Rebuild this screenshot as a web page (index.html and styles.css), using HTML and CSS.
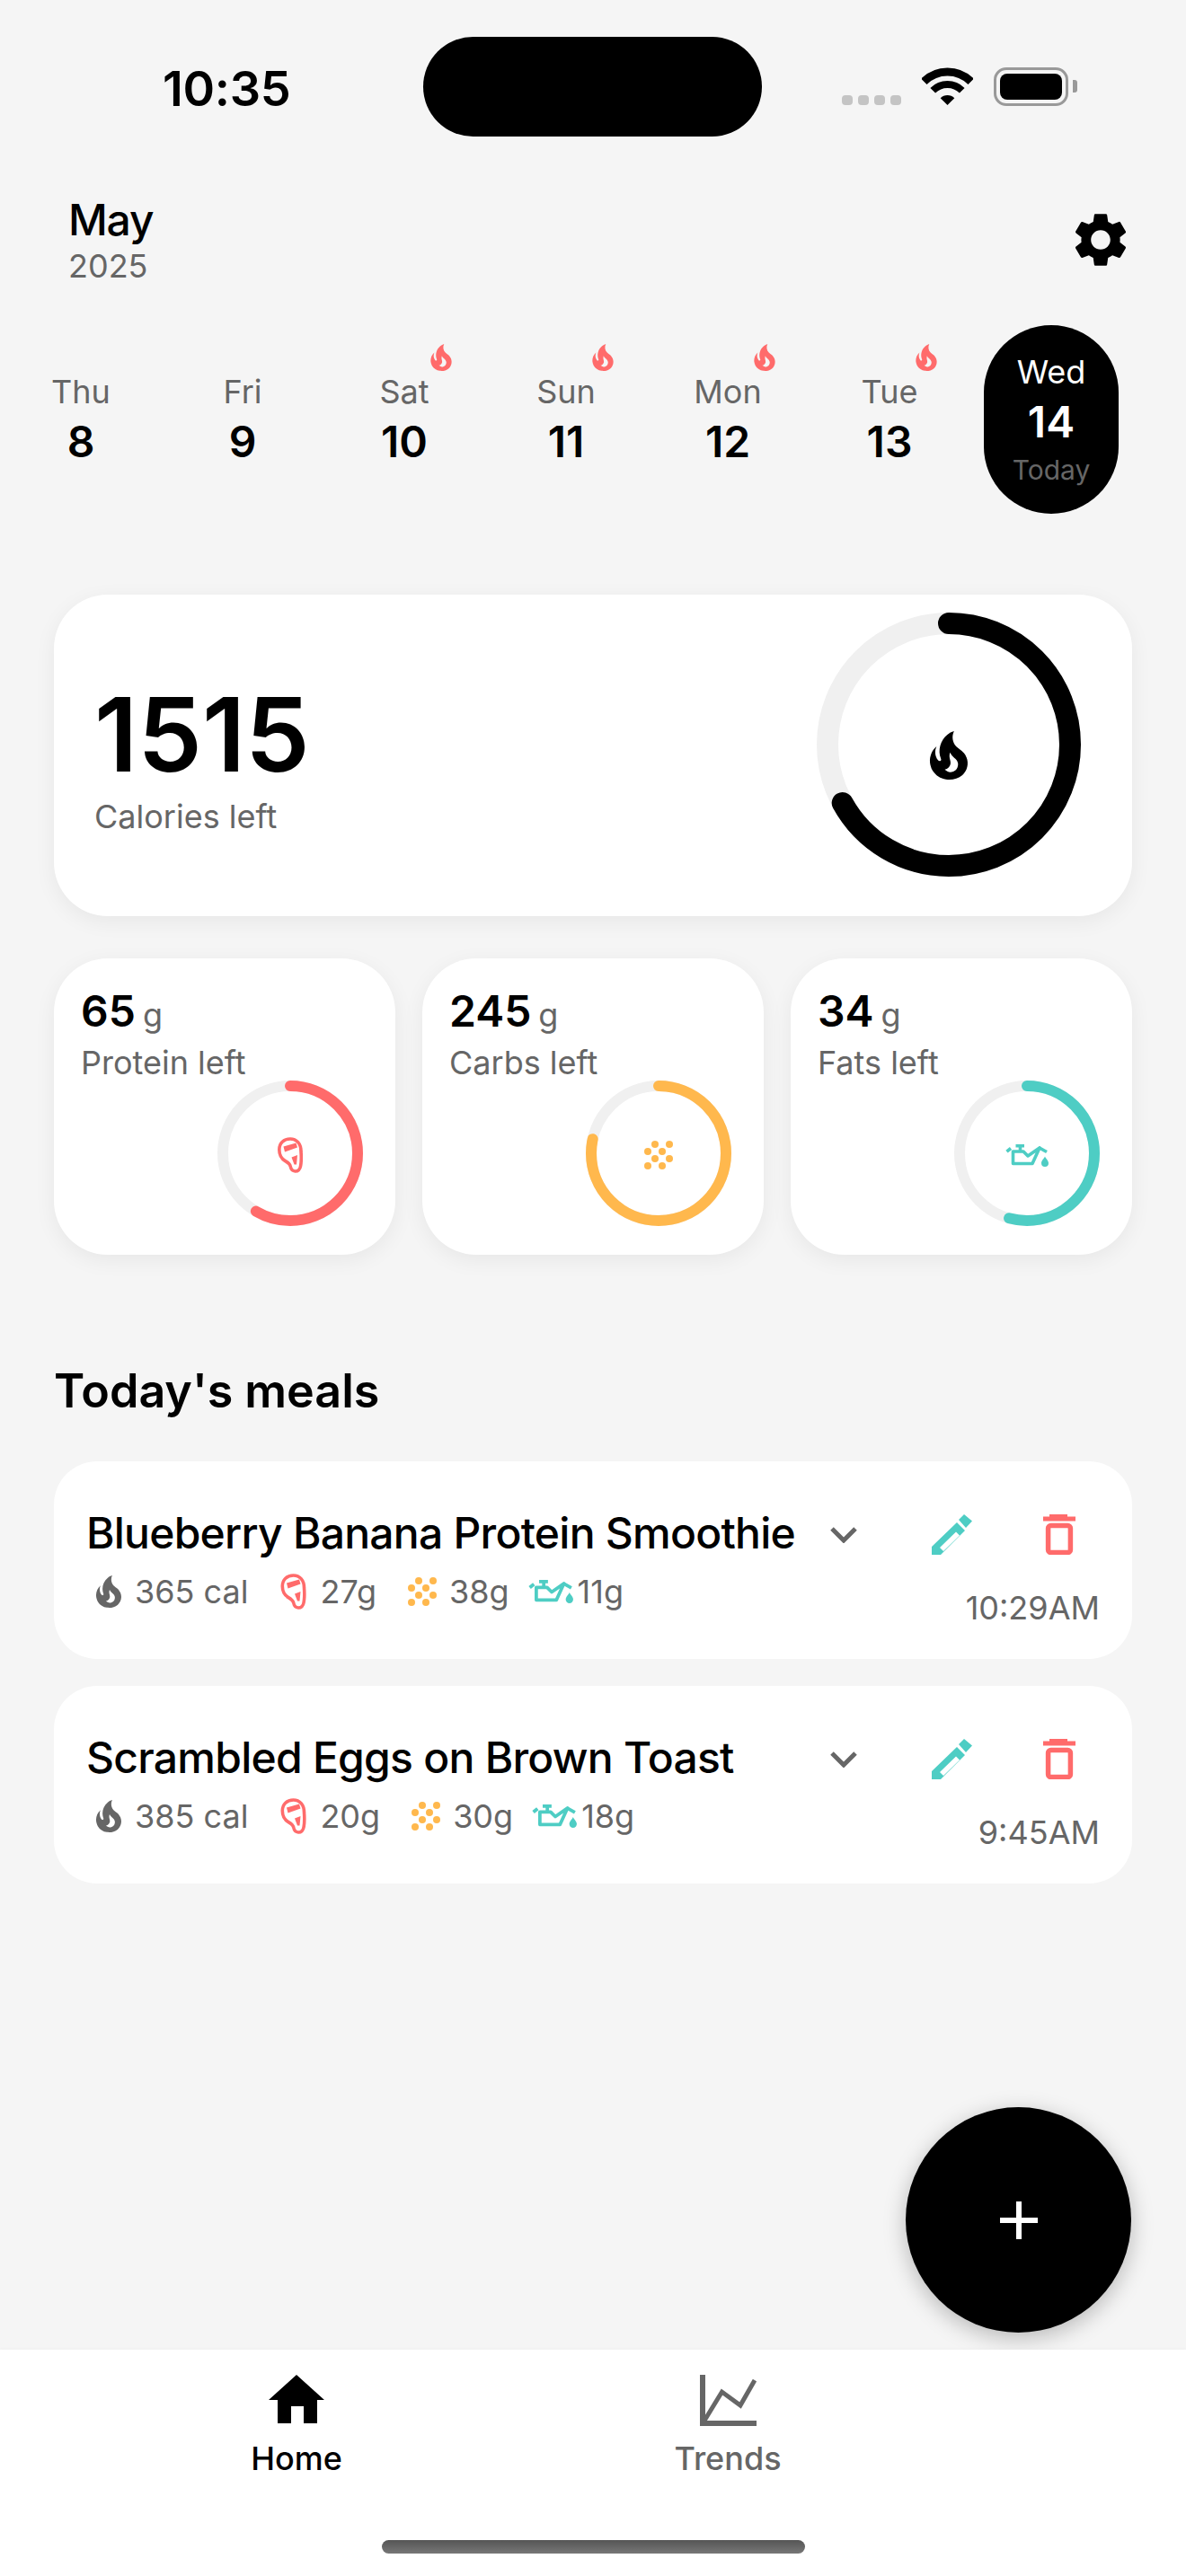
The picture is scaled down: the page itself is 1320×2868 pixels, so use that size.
FILE: index.html
```html
<!DOCTYPE html>
<html lang="en">
<head>
<meta charset="utf-8">
<title>Calorie tracker</title>
<link rel="stylesheet" href="styles.css">
</head>
<body>
<svg class="defs" width="0" height="0" aria-hidden="true">
  <symbol id="i-fire" viewBox="0 0 24 24"><path fill="currentColor" d="M17.66 11.2C17.43 10.9 17.15 10.64 16.89 10.38C16.22 9.78 15.46 9.35 14.82 8.72C13.33 7.26 13 4.85 13.95 3C13 3.23 12.17 3.75 11.46 4.32C8.87 6.4 7.85 10.07 9.07 13.22C9.11 13.32 9.15 13.42 9.15 13.55C9.15 13.77 9 13.97 8.8 14.05C8.57 14.15 8.33 14.09 8.14 13.93C8.08 13.88 8.04 13.83 8 13.76C6.87 12.33 6.69 10.28 7.45 8.64C5.78 10 4.87 12.3 5 14.47C5.06 14.97 5.12 15.47 5.29 15.97C5.43 16.57 5.7 17.17 6 17.7C7.08 19.43 8.95 20.67 10.96 20.92C13.1 21.19 15.39 20.8 17.03 19.32C18.86 17.66 19.5 15 18.56 12.72L18.43 12.46C18.22 12 17.66 11.2 17.66 11.2M14.5 17.5C14.22 17.74 13.76 18 13.4 18.1C12.28 18.5 11.16 17.94 10.5 17.28C11.69 17 12.4 16.12 12.61 15.23C12.78 14.43 12.46 13.77 12.33 13C12.21 12.26 12.23 11.63 12.5 10.94C12.69 11.32 12.89 11.7 13.13 12C13.9 13 15.11 13.44 15.37 14.8C15.41 14.94 15.43 15.08 15.43 15.23C15.46 16.05 15.1 16.95 14.5 17.5H14.5Z"/></symbol>
  <symbol id="i-steak" viewBox="0 0 28 40"><path fill="none" stroke="currentColor" stroke-width="3.6" stroke-linejoin="round" d="M14 2C21 2 26 7 26 16C26.5 22 26.3 28 25.6 32C25 36 22.5 38.2 19.5 38C16.5 37.8 14.8 35.5 14.2 32.5C13.6 29.5 11.5 28.4 8.5 26.6C4.5 24.2 1.8 20 1.8 14C1.8 6.5 7 2 14 2Z"/><path fill="currentColor" d="M6.5 10.5L20.5 6.5L22 11.5L8 16.5ZM15.5 22.5L22 20L21 30.5L18.5 30.5Z"/></symbol>
  <symbol id="i-grain" viewBox="0 0 32 32"><g fill="currentColor"><circle cx="12" cy="4" r="4"/><circle cx="28" cy="4" r="4"/><circle cx="4" cy="12" r="4"/><circle cx="20" cy="12" r="4"/><circle cx="12" cy="20" r="4"/><circle cx="28" cy="20" r="4"/><circle cx="4" cy="28" r="4"/><circle cx="20" cy="28" r="4"/></g></symbol>
  <symbol id="i-oil" viewBox="0 0 48 25"><g fill="none" stroke="currentColor" stroke-width="3.6"><path d="M1.5 8.2L6 4.5"/><path d="M11.5 1.8H21M16.5 1.8V8"/><path stroke-linejoin="round" d="M8.5 8H20L25 13L38 4L30 21.5H8.5Z"/><path d="M37 3.5L46 8.5"/></g><path fill="currentColor" d="M44 13.5C45 16 48 18 48 21A4 4 0 0 1 40 21C40 18 43 16 44 13.5Z"/></symbol>
</svg>
<div class="app">
  <header class="status">
    <div class="clock">10:35</div>
    <div class="island"></div>
    <div class="signal"><span></span><span></span><span></span><span></span></div>
    <svg class="wifi" width="57" height="42" viewBox="0 0 57 42"><path fill="none" stroke="#000" stroke-width="9" d="M2.34 15.84A37 37 0 0 1 54.66 15.84"/><path fill="none" stroke="#000" stroke-width="8" d="M12.24 25.74A23 23 0 0 1 44.76 25.74"/><path d="M28.5 42L20.7 34.2A11 11 0 0 1 36.3 34.2Z"/></svg>
    <div class="battery"><div class="battery-fill"></div></div>
    <div class="battery-cap"></div>
  </header>

  <section class="month-row">
    <div>
      <div class="month">May</div>
      <div class="year">2025</div>
    </div>
    <svg class="gear" width="72" height="72" viewBox="0 0 24 24"><path d="M19.14 12.94c.04-.3.06-.61.06-.94 0-.32-.02-.64-.07-.94l2.03-1.58a.49.49 0 0 0 .12-.61l-1.92-3.32a.488.488 0 0 0-.59-.22l-2.39.96c-.5-.38-1.03-.7-1.62-.94l-.36-2.54a.484.484 0 0 0-.48-.41h-3.84c-.24 0-.43.17-.47.41l-.36 2.54c-.59.24-1.13.57-1.62.94l-2.39-.96c-.22-.08-.47 0-.59.22L2.74 8.87c-.12.21-.08.47.12.61l2.03 1.58c-.05.3-.09.63-.09.94s.02.64.07.94l-2.03 1.58a.49.49 0 0 0-.12.61l1.92 3.32c.12.22.37.29.59.22l2.39-.96c.5.38 1.03.7 1.62.94l.36 2.54c.05.24.24.41.48.41h3.84c.24 0 .44-.17.47-.41l.36-2.54c.59-.24 1.13-.56 1.62-.94l2.39.96c.22.08.47 0 .59-.22l1.92-3.32c.12-.22.07-.47-.12-.61l-2.01-1.58zM12 15.6c-1.98 0-3.6-1.62-3.6-3.6s1.62-3.6 3.6-3.6 3.6 1.62 3.6 3.6-1.62 3.6-3.6 3.6z"/></svg>
  </section>

  <nav class="days">
    <div class="day"><div class="day-name">Thu</div><div class="day-num">8</div></div>
    <div class="day"><div class="day-name">Fri</div><div class="day-num">9</div></div>
    <div class="day"><svg class="streak"><use href="#i-fire"/></svg><div class="day-name">Sat</div><div class="day-num">10</div></div>
    <div class="day"><svg class="streak"><use href="#i-fire"/></svg><div class="day-name">Sun</div><div class="day-num">11</div></div>
    <div class="day"><svg class="streak"><use href="#i-fire"/></svg><div class="day-name">Mon</div><div class="day-num">12</div></div>
    <div class="day"><svg class="streak"><use href="#i-fire"/></svg><div class="day-name">Tue</div><div class="day-num">13</div></div>
    <div class="day day-today"><div class="today-pill"><div class="day-name">Wed</div><div class="day-num">14</div><div class="day-note">Today</div></div></div>
  </nav>

  <section class="calorie-card">
    <div class="calorie-text">
      <div class="calorie-value">1515</div>
      <div class="calorie-label">Calories left</div>
    </div>
    <div class="calorie-ring">
      <svg width="294" height="294" viewBox="0 0 294 294"><circle cx="147" cy="147" r="135" fill="none" stroke="#f0f0f0" stroke-width="24"/><circle cx="147" cy="147" r="135" fill="none" stroke="#000" stroke-width="24" stroke-linecap="round" pathLength="100" stroke-dasharray="67 100" transform="rotate(-90 147 147)"/></svg>
      <div class="calorie-ring-icon"><svg width="72" height="72"><use href="#i-fire"/></svg></div>
    </div>
  </section>

  <section class="macros">
    <article class="macro macro-protein">
      <div class="macro-value">65<span class="macro-unit">g</span></div>
      <div class="macro-label">Protein left</div>
      <div class="macro-ring">
        <svg width="162" height="162" viewBox="0 0 162 162"><circle cx="81" cy="81" r="75" fill="none" stroke="#f0f0f0" stroke-width="12"/><circle class="arc" cx="81" cy="81" r="75" fill="none" stroke-width="12" stroke-linecap="round" pathLength="100" stroke-dasharray="58.5 100" transform="rotate(-90 81 81)"/></svg>
        <div class="macro-icon"><svg width="28" height="40"><use href="#i-steak"/></svg></div>
      </div>
    </article>
    <article class="macro macro-carbs">
      <div class="macro-value">245<span class="macro-unit">g</span></div>
      <div class="macro-label">Carbs left</div>
      <div class="macro-ring">
        <svg width="162" height="162" viewBox="0 0 162 162"><circle cx="81" cy="81" r="75" fill="none" stroke="#f0f0f0" stroke-width="12"/><circle class="arc" cx="81" cy="81" r="75" fill="none" stroke-width="12" stroke-linecap="round" pathLength="100" stroke-dasharray="78.4 100" transform="rotate(-90 81 81)"/></svg>
        <div class="macro-icon"><svg width="32" height="32"><use href="#i-grain"/></svg></div>
      </div>
    </article>
    <article class="macro macro-fats">
      <div class="macro-value">34<span class="macro-unit">g</span></div>
      <div class="macro-label">Fats left</div>
      <div class="macro-ring">
        <svg width="162" height="162" viewBox="0 0 162 162"><circle cx="81" cy="81" r="75" fill="none" stroke="#f0f0f0" stroke-width="12"/><circle class="arc" cx="81" cy="81" r="75" fill="none" stroke-width="12" stroke-linecap="round" pathLength="100" stroke-dasharray="54.3 100" transform="rotate(-90 81 81)"/></svg>
        <div class="macro-icon"><svg width="48" height="25"><use href="#i-oil"/></svg></div>
      </div>
    </article>
  </section>

  <h2 class="section-title">Today's meals</h2>

  <section class="meals">
    <article class="meal">
      <div class="meal-main">
        <div class="meal-title">Blueberry Banana Protein Smoothie</div>
        <div class="meal-meta">
          <span class="meta meta-cal"><svg class="m-fire" width="48" height="48"><use href="#i-fire"/></svg>365 cal</span>
          <span class="meta meta-protein"><svg class="m-steak" width="29" height="40"><use href="#i-steak"/></svg>27g</span>
          <span class="meta meta-carbs"><svg class="m-grain" width="32" height="32"><use href="#i-grain"/></svg>38g</span>
          <span class="meta meta-fats"><svg class="m-oil" width="50" height="26"><use href="#i-oil"/></svg>11g</span>
        </div>
      </div>
      <svg class="chevron" width="30" height="18" viewBox="0 0 30 18"><path d="M2 2L15 15L28 2"/></svg>
      <div class="meal-side">
        <div class="meal-actions">
          <svg class="edit" width="45" height="45" viewBox="0 0 45 45"><path d="M30 6L36 0L45 7.5L38 15ZM0 36L28 9L37 18L10 45H0ZM9 37L13 41L31 23.5L27 19.5Z" fill-rule="evenodd"/></svg>
          <svg class="trash" width="36" height="45" viewBox="0 0 36 45"><path class="trash-fill" d="M7 0H27V2.5H36V7.5H0V2.5H7Z"/><rect class="trash-body" x="5.6" y="12.5" width="24.8" height="30" rx="3"/></svg>
        </div>
        <div class="meal-time">10:29AM</div>
      </div>
    </article>
    <article class="meal">
      <div class="meal-main">
        <div class="meal-title">Scrambled Eggs on Brown Toast</div>
        <div class="meal-meta">
          <span class="meta meta-cal"><svg class="m-fire" width="48" height="48"><use href="#i-fire"/></svg>385 cal</span>
          <span class="meta meta-protein"><svg class="m-steak" width="29" height="40"><use href="#i-steak"/></svg>20g</span>
          <span class="meta meta-carbs"><svg class="m-grain" width="32" height="32"><use href="#i-grain"/></svg>30g</span>
          <span class="meta meta-fats"><svg class="m-oil" width="50" height="26"><use href="#i-oil"/></svg>18g</span>
        </div>
      </div>
      <svg class="chevron" width="30" height="18" viewBox="0 0 30 18"><path d="M2 2L15 15L28 2"/></svg>
      <div class="meal-side">
        <div class="meal-actions">
          <svg class="edit" width="45" height="45" viewBox="0 0 45 45"><path d="M30 6L36 0L45 7.5L38 15ZM0 36L28 9L37 18L10 45H0ZM9 37L13 41L31 23.5L27 19.5Z" fill-rule="evenodd"/></svg>
          <svg class="trash" width="36" height="45" viewBox="0 0 36 45"><path class="trash-fill" d="M7 0H27V2.5H36V7.5H0V2.5H7Z"/><rect class="trash-body" x="5.6" y="12.5" width="24.8" height="30" rx="3"/></svg>
        </div>
        <div class="meal-time">9:45AM</div>
      </div>
    </article>
  </section>

  <button class="fab" type="button" aria-label="Add meal"><svg width="42" height="42" viewBox="0 0 42 42"><path d="M18 0h6v18h18v6H24v18h-6V24H0v-6h18z"/></svg></button>

  <footer class="tabbar">
    <div class="tabs">
      <div class="tab tab-active">
        <div class="tab-icon"><svg width="62" height="54" viewBox="0 0 62 54"><path d="M31 0L62 28H54V54H39V35H25V54H10V28H0Z"/></svg></div>
        <div class="tab-label">Home</div>
      </div>
      <div class="tab">
        <div class="tab-icon"><svg width="63" height="57" viewBox="0 0 63 57"><path d="M3 0V54H63" fill="none" stroke="#666" stroke-width="6"/><path d="M5 51L24.5 19L45 34L61 6" fill="none" stroke="#666" stroke-width="5"/></svg></div>
        <div class="tab-label">Trends</div>
      </div>
    </div>
    <div class="home-indicator"></div>
  </footer>
</div>
</body>
</html>
```

FILE: styles.css
```css
* { box-sizing: border-box; }
html, body { margin: 0; padding: 0; }
body { font-family: Inter, "Liberation Sans", sans-serif; color: #000; background: #f5f5f5; }
.defs { position: absolute; }
svg { display: block; flex: none; }

.app { width: 1320px; height: 2868px; display: flex; flex-direction: column; position: relative; overflow: hidden; background: #f5f5f5; }

/* status bar */
.status { height: 152px; padding: 41px 0 0 181px; display: flex; align-items: flex-start; }
.clock { width: 290px; margin-top: 31px; font-size: 54px; line-height: 54px; font-weight: 600; letter-spacing: -0.3px; }
.island { width: 377px; height: 111px; border-radius: 56px; background: #000; }
.signal { margin: 65px 0 0 89px; display: flex; gap: 6px; }
.signal span { width: 12px; height: 11px; border-radius: 4px; background: #c4c4c4; }
.wifi { margin: 34px 0 0 23px; }
.battery { width: 83px; height: 43px; margin: 34px 0 0 23px; padding: 4px; border: 3px solid #999; border-radius: 14px; }
.battery-fill { width: 100%; height: 100%; border-radius: 8px; background: #000; }
.battery-cap { width: 5px; height: 14px; margin: 48px 0 0 5px; border-radius: 0 3px 3px 0; background: #999; }

/* month row */
.month-row { margin-top: 64px; padding: 0 59px 0 76px; display: flex; justify-content: space-between; align-items: center; }
.month { font-size: 48px; line-height: 58px; font-weight: 500; letter-spacing: -1.2px; }
.year { font-size: 36px; line-height: 44px; color: #666; }

/* day strip */
.days { margin-top: 44px; display: flex; width: 1260px; }
.day { width: 180px; height: 210px; padding-top: 52px; position: relative; text-align: center; }
.day-name { font-size: 36px; line-height: 44px; color: #666; }
.day-num { margin-top: 5px; font-size: 48px; line-height: 58px; font-weight: 600; }
.streak { position: absolute; left: 111px; top: 16px; width: 40px; height: 40px; color: #ff6b6b; }
.day-today { padding-top: 0; display: flex; justify-content: center; }
.today-pill { width: 150px; height: 210px; padding-top: 30px; border-radius: 75px; background: #000; color: #fff; }
.today-pill .day-name { color: #fff; }
.day-note { margin-top: 6px; font-size: 30px; line-height: 36px; color: #666; }

/* calories */
.calorie-card { margin: 90px 60px 0; height: 358px; padding: 20px 57px 0 45px; display: flex; justify-content: space-between; border-radius: 60px; background: #fff; box-shadow: 0 6px 24px rgba(0,0,0,.06); }
.calorie-text { padding-top: 78px; }
.calorie-value { font-size: 114px; line-height: 116px; font-weight: 600; }
.calorie-label { margin-top: 11px; font-size: 36px; line-height: 44px; color: #666; }
.calorie-ring { position: relative; width: 294px; height: 294px; }
.calorie-ring-icon { position: absolute; inset: 0; padding-top: 24px; display: flex; align-items: center; justify-content: center; color: #000; }

/* macros */
.macros { margin: 47px 60px 0; display: flex; gap: 30px; }
.macro { width: 380px; height: 330px; padding: 30px 36px 33px 30px; display: flex; flex-direction: column; border-radius: 60px; background: #fff; box-shadow: 0 6px 24px rgba(0,0,0,.06); }
.macro-value { font-size: 48px; line-height: 58px; font-weight: 600; }
.macro-unit { margin-left: 8px; font-size: 36px; font-weight: 400; color: #666; }
.macro-label { margin-top: 4px; font-size: 36px; line-height: 40px; color: #666; }
.macro-ring { position: relative; width: 162px; height: 162px; margin-top: auto; align-self: flex-end; }
.macro-icon { position: absolute; inset: 0; padding-top: 4px; display: flex; align-items: center; justify-content: center; }
.macro-protein .arc { stroke: #ff6b6b; }
.macro-protein .macro-icon { color: #ff6b6b; }
.macro-carbs .arc { stroke: #ffb84d; }
.macro-carbs .macro-icon { color: #ffb84d; }
.macro-fats .arc { stroke: #4ecdc4; }
.macro-fats .macro-icon { color: #4ecdc4; }

/* meals */
.section-title { margin: 119px 0 0 60px; font-size: 52px; line-height: 66px; font-weight: 600; }
.meals { margin: 45px 60px 0; display: flex; flex-direction: column; gap: 30px; }
.meal { height: 220px; padding: 51px 36px 0; display: flex; align-items: flex-start; border-radius: 48px; background: #fff; }
.meal-main { width: 828px; }
.meal-title { font-size: 48px; line-height: 58px; font-weight: 500; letter-spacing: -0.75px; white-space: nowrap; }
.meal-meta { margin-top: 12px; height: 48px; display: flex; align-items: center; font-size: 36px; line-height: 44px; color: #666; }
.meta { display: flex; align-items: center; }
.meta-cal { margin-left: 1px; gap: 5px; }
.meta-protein { margin-left: 36px; gap: 15px; }
.meta-carbs { margin-left: 35px; gap: 14px; }
.meta-fats { margin-left: 21px; gap: 5px; }
.m-fire { color: #666; }
.m-steak { color: #ff6b6b; }
.m-grain { color: #ffb84d; }
.m-oil { color: #4ecdc4; }
.chevron { margin-top: 22px; }
.chevron path { fill: none; stroke: #666; stroke-width: 5; }
.meal-side { width: 187px; margin-left: 83px; margin-top: 8px; display: flex; flex-direction: column; align-items: flex-end; }
.meal-actions { width: 187px; display: flex; gap: 79px; }
.edit { fill: #4ecdc4; }
.trash-fill { fill: #ff6b6b; }
.trash-body { fill: none; stroke: #ff6b6b; stroke-width: 5.5; }
.meal-time { margin-top: 37px; font-size: 36px; line-height: 44px; color: #666; }

/* fab */
.fab { position: absolute; left: 1008px; top: 2346px; width: 251px; height: 251px; padding: 0; border: 0; border-radius: 50%; display: flex; align-items: center; justify-content: center; background: #000; box-shadow: 0 6px 24px rgba(0,0,0,.25); z-index: 1; }
.fab path { fill: #fff; }

/* tab bar */
.tabbar { position: relative; z-index: 2; margin-top: auto; height: 252px; display: flex; flex-direction: column; background: #fff; box-shadow: 0 -2px 3px rgba(0,0,0,.015); }
.tabs { padding: 28px 270px 0 90px; display: flex; }
.tab { width: 480px; display: flex; flex-direction: column; align-items: center; }
.tab-icon { height: 57px; }
.tab-label { margin-top: 14px; font-size: 36px; line-height: 44px; color: #666; font-weight: 500; }
.tab-active .tab-label { color: #000; }
.home-indicator { width: 471px; height: 15px; margin: 69px auto 0; border-radius: 8px; background: linear-gradient(#555, #777); }
```
